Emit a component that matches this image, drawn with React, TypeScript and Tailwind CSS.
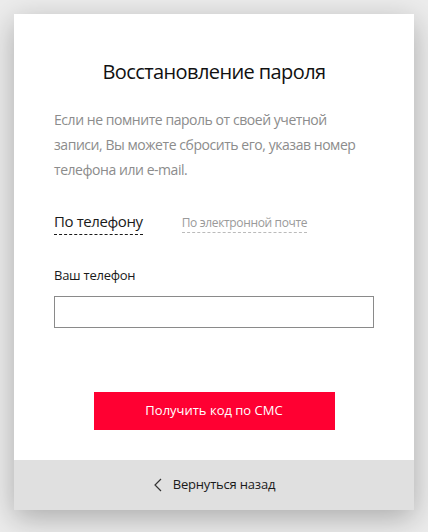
import { useState } from 'react';

export default function App() {
  const [tab, setTab] = useState<'phone' | 'email'>('phone');
  const [phone, setPhone] = useState('');

  return (
    <div className="min-h-screen bg-[#ececec] pt-[14px] px-[14px] font-['Open_Sans',sans-serif]">
      <div className="w-[400px] bg-white shadow-[0_8px_28px_rgba(0,0,0,0.28)]">
        <div className="px-[40px] pt-[44px] pb-[30px]">
          <h1 className="text-center text-[20px] leading-[28px] tracking-[-0.6px] text-[#111]">Восстановление пароля</h1>
          <p className="mt-[21px] text-[14px] leading-[25px] text-[#8c8c8c] tracking-[-0.45px]">
            Если не помните пароль от своей учетной записи, Вы можете сбросить его, указав номер телефона или e-mail.
          </p>

          <div className="mt-[29px] flex items-baseline gap-[39px]">
            <button
              type="button"
              onClick={() => setTab('phone')}
              className={`border-b border-dashed ${
                tab === 'phone'
                  ? 'text-[15px] leading-[20px] pb-[3px] tracking-[-0.4px] text-[#1a1a1a] border-[#1a1a1a]'
                  : 'text-[12px] leading-[16px] pb-[1px] tracking-[-0.35px] text-[#9a9a9a] border-[#bbb]'
              }`}
            >
              По телефону
            </button>
            <button
              type="button"
              onClick={() => setTab('email')}
              className={`border-b border-dashed ${
                tab === 'email'
                  ? 'text-[15px] leading-[20px] pb-[3px] tracking-[-0.4px] text-[#1a1a1a] border-[#1a1a1a]'
                  : 'text-[12px] leading-[16px] pb-[1px] tracking-[-0.35px] text-[#9a9a9a] border-[#bbb]'
              }`}
            >
              По электронной почте
            </button>
          </div>

          <label className="mt-[31px] block text-[13px] leading-[18px] tracking-[-0.25px] text-[#1a1a1a]">
            {tab === 'phone' ? 'Ваш телефон' : 'Ваш e-mail'}
          </label>
          <input
            type="text"
            value={phone}
            onChange={(e) => setPhone(e.target.value)}
            className="mt-[12px] block w-full h-[32px] border border-[#8a8a8a] px-2 text-[14px] outline-none"
          />

          <div className="mt-[64px] flex justify-center">
            <button type="button" className="w-[241px] h-[38px] bg-[#ff0032] text-white text-[13px]">
              Получить код по СМС
            </button>
          </div>
        </div>

        <button
          type="button"
          className="flex w-full h-[50px] items-center justify-center gap-[11px] bg-[#e0e0e0] text-[13px] tracking-[-0.2px] text-[#1a1a1a]"
        >
          <svg width="9" height="14" viewBox="0 0 9 14" fill="none" stroke="#333" strokeWidth="1.2">
            <path d="M8 1L2 7l6 6" />
          </svg>
          Вернуться назад
        </button>
      </div>
    </div>
  );
}
